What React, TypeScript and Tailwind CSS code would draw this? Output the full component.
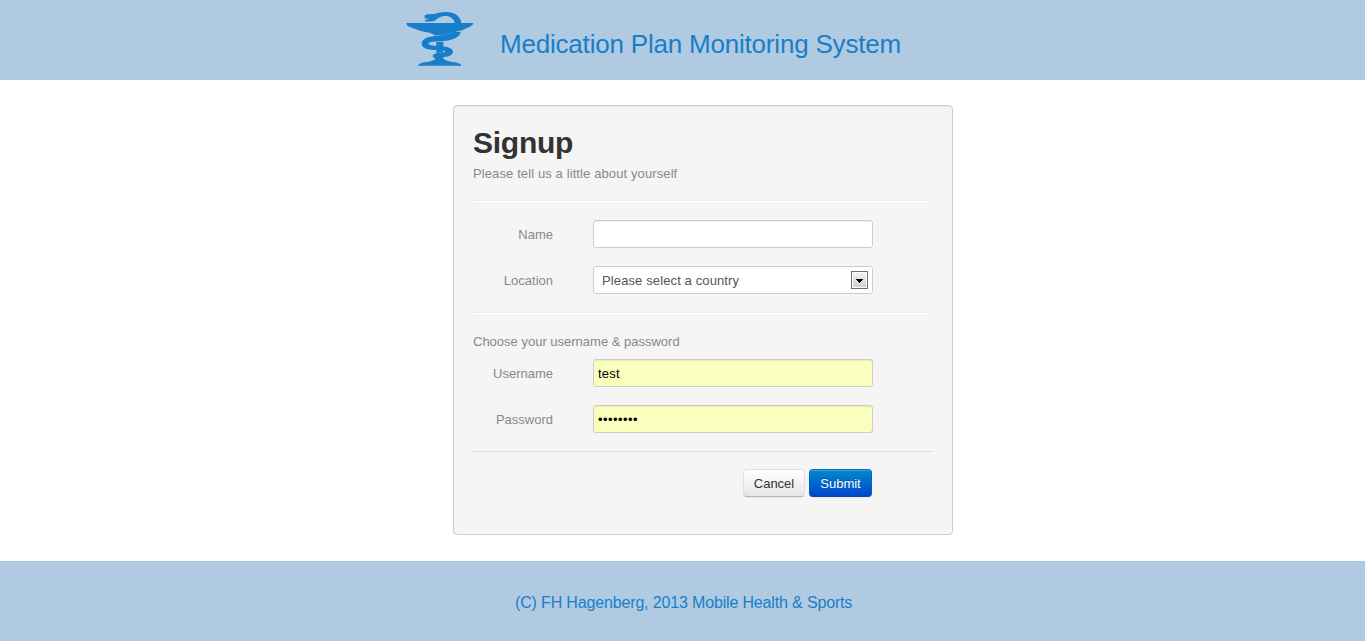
import type { ReactNode } from "react";

function Logo() {
  return (
    <svg viewBox="0 0 270 240" className="h-20 w-[90px] shrink-0" fill="#177fc9" aria-hidden="true">
      <path d="M34 69H235C234 75 230 77 225 80L198 92C181 97 160 98 149 106L147 111H122L120 106C110 97 92 97 75 92L45 81C37 78 34 75 34 69Z" />
      <path d="M89 46L98 43L113 42C125 42 127 37 151 36C178 35 197 48 199 70H180C177 55 164 47 148 48C134 49 128 57 119 62C111 65 101 63 92 65L90 60L103 56L89 55Z" />
      <path d="M123 108H147L144 145V172C145 179 153 182 168 185C182 187 198 189 199 197H69C71 189 87 187 100 185C116 182 124 178 125 172Z" />
      <path
        d="M197 92C182 99 160 104 146 106L123 107M123 124.500H147M123 147H147M130 159H150"
        fill="none"
        stroke="#b0cae2"
        strokeWidth="2.500"
      />
      <path d="M197 95C195 112 173 120 146 123C121 124 101 125 100 131C101 136 120 137 142 139C162 141 175 147 174 156C173 169 151 171 136 173C132 174 133 176 136 180C121 179 111 172 114 165C118 158 142 159 149 156C155 152 143 152 125 150C99 150 80 145 80 131C80 116 99 109 123 108C150 106 164 101 172 97Z" />
    </svg>
  );
}

function Row({ label, htmlFor, children }: { label: string; htmlFor: string; children: ReactNode }) {
  return (
    <div className="flex h-7 items-center gap-10">
      <label htmlFor={htmlFor} className="w-20 pt-0.5 text-right text-[#888]">
        {label}
      </label>
      {children}
    </div>
  );
}

const field =
  "h-7 w-[280px] rounded-[3px] border border-[#ccc] px-1 text-[13px] leading-[18px] shadow-[inset_0_1px_1px_rgba(0,0,0,0.075)] outline-none";

export default function App() {
  return (
    <div className="flex h-[641px] flex-col bg-white font-['Liberation_Sans',Arial,sans-serif] text-[13px] leading-[18px] text-[#333]">
      <header className="flex h-20 shrink-0 items-center bg-[#b0cae2] pl-[395px]">
        <Logo />
        <h1 className="pt-2 pl-[15px] text-[26px] leading-9 tracking-[-0.2px] whitespace-nowrap text-[#177fc9]">
          Medication Plan Monitoring System
        </h1>
      </header>

      <main className="flex flex-1 items-start pt-[25px] pl-[453px]">
        <form
          className="h-[430px] w-[500px] rounded-[4px] border border-[#ccc] bg-[#f5f5f5] px-[19px] pt-[19px] shadow-[inset_0_1px_1px_rgba(0,0,0,0.05)]"
          onSubmit={(e) => e.preventDefault()}
        >
          <h2 className="text-[30px] leading-9 font-bold tracking-[-0.25px]">Signup</h2>
          <p className="mt-1 tracking-[0.11px] text-[#888]">Please tell us a little about yourself</p>
          <hr className="mt-[17px] h-0.5 border-t border-b border-t-[#eee] border-b-white" />
          <div className="mt-[18px] flex flex-col gap-[18px]">
            <Row label="Name" htmlFor="name">
              <input id="name" className={`${field} bg-white`} />
            </Row>
            <Row label="Location" htmlFor="location">
              <button
                id="location"
                type="button"
                className="flex h-7 w-[280px] items-center justify-between rounded-[3px] border border-[#ccc] bg-white pr-1 pl-2 text-[#555]"
              >
                <span className="pt-0.5 tracking-[0.12px]">Please select a country</span>
                <span className="flex h-[18px] w-[17px] items-center justify-center border border-[#707070] bg-linear-to-b from-[#f2f2f2] to-[#cfcfcf] shadow-[inset_0_0_0_1px_#fcfcfc]">
                  <svg viewBox="0 0 7 4" className="mt-0.5 h-1 w-[7px]" shapeRendering="crispEdges">
                    <path d="M0 0H7V1H6V2H5V3H4V4H3V3H2V2H1V1H0Z" />
                  </svg>
                </span>
              </button>
            </Row>
          </div>
          <hr className="mt-[18px] h-0.5 border-t border-b border-t-[#eee] border-b-white" />
          <p className="mt-[19px] text-[#888]">Choose your username &amp; password</p>
          <div className="mt-2 flex flex-col gap-[18px]">
            <Row label="Username" htmlFor="username">
              <input
                id="username"
                defaultValue="test"
                className={`${field} bg-[#faffbd] tracking-[0.2px] text-black`}
              />
            </Row>
            <Row label="Password" htmlFor="password">
              <input
                id="password"
                type="password"
                defaultValue="password"
                className={`${field} bg-[#faffbd] tracking-[0.45px] text-black`}
              />
            </Row>
          </div>
          <hr className="mt-[18px] border-t border-[#ddd]" />
          <div className="mt-[17px] flex justify-end gap-1 pr-[61px]">
            <button
              type="button"
              className="h-7 w-[62px] rounded-[4px] border border-[#e0e0e0] border-b-[#b3b3b3] bg-linear-to-b from-white to-[#e6e6e6] pt-0.5 shadow-[inset_0_1px_0_rgba(255,255,255,0.2),0_1px_2px_rgba(0,0,0,0.05)]"
            >
              Cancel
            </button>
            <button
              type="submit"
              className="h-7 w-[63px] rounded-[4px] border border-[#0064b8] border-t-[#0074bb] border-b-[#004fa3] bg-linear-to-b from-[#08c] to-[#04c] pt-0.5 text-white shadow-[inset_0_1px_0_rgba(255,255,255,0.2),0_1px_2px_rgba(0,0,0,0.05)] text-shadow-[0_-1px_0_rgba(0,0,0,0.25)]"
            >
              Submit
            </button>
          </div>
        </form>
      </main>

      <footer className="flex h-20 shrink-0 items-center bg-[#b0cae2] pt-[3px] pl-[515px] text-base tracking-[-0.155px] whitespace-nowrap text-[#177fc9]">
        (C) FH Hagenberg, 2013 Mobile Health &amp; Sports
      </footer>
    </div>
  );
}
